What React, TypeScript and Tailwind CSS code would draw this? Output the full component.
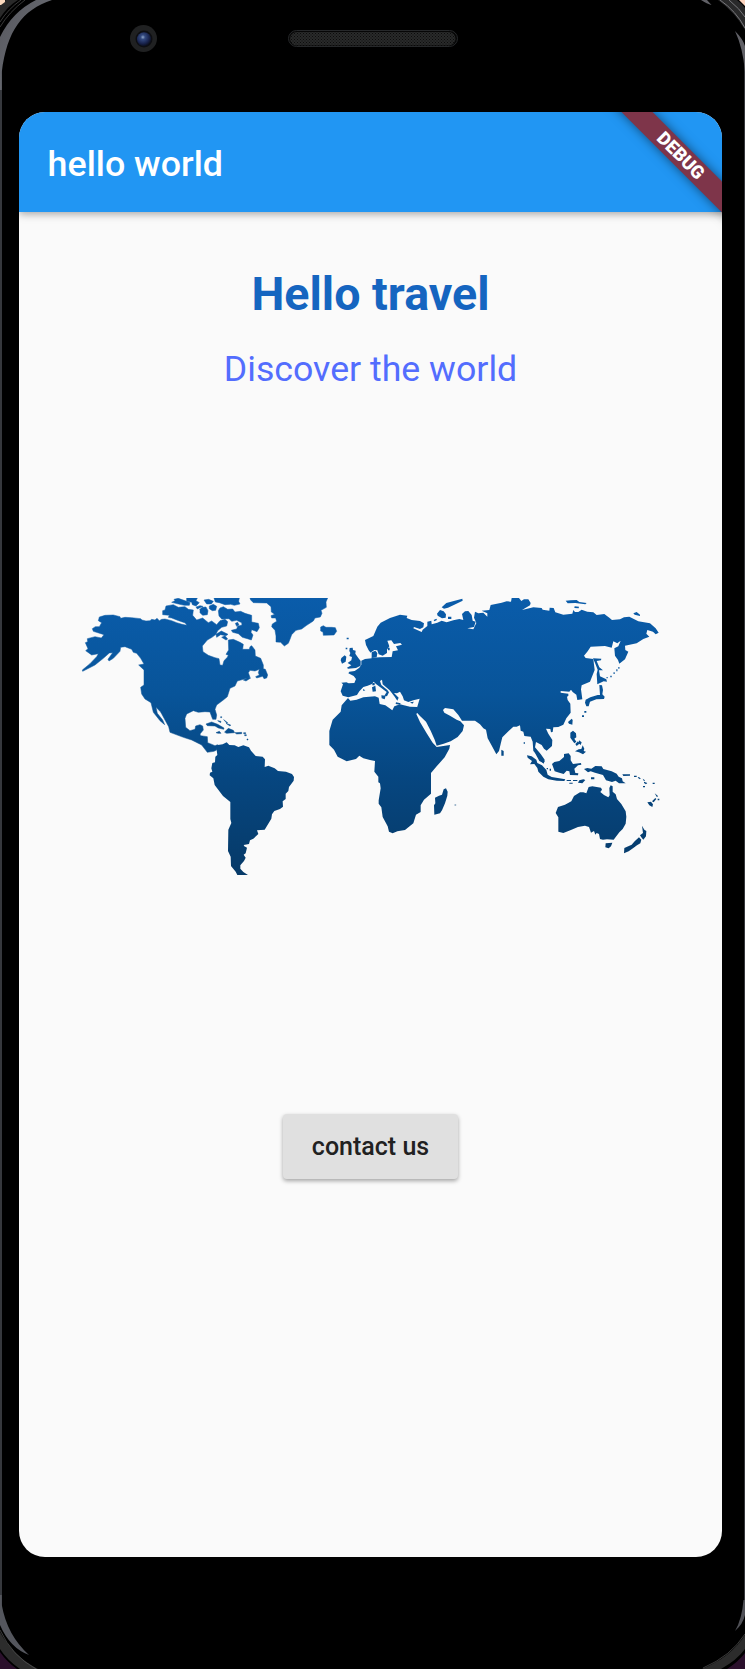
import React from "react";

function WorldMap() {
  return (
    <svg className="block h-[277px] w-[600px]" viewBox="71 598 600 277" role="img" aria-label="World map">
      <defs>
        <linearGradient id="ocean" x1="0" y1="598" x2="0" y2="875" gradientUnits="userSpaceOnUse">
          <stop offset="0" stopColor="#0a5caa" />
          <stop offset="0.35" stopColor="#085499" />
          <stop offset="0.65" stopColor="#064680" />
          <stop offset="1" stopColor="#063a68" />
        </linearGradient>
        <mask id="land" maskUnits="userSpaceOnUse" x="70" y="598" width="600" height="277">
          {/* Americas, Greenland and Iceland */}
          <g transform="translate(70 590) scale(.33333)" fill="#fff" stroke="#fff" strokeWidth="1.5" strokeLinejoin="round">
            <path d="M95 98L85 92L88 81L105 76L130 75L150 80L152 85L165 82L185 83L212 86L216 90L228 93L240 92L245 88L255 90L261 85L268 92L275 88L285 87L305 92L320 98L336 103L350 106L346 99L326 92L305 84L295 82L298 76L278 74L278 62L285 60L288 48L310 44L325 52L345 50L355 58L370 60L368 76L380 90L398 84L415 98L425 93L440 104L450 92L465 88L473 95L470 108L455 112L443 122L438 133L426 142L412 150L397 168L399 185L415 196L435 203L447 206L450 225L458 226L462 212L472 202L475 196L468 193L476 180L475 150L490 148L510 157L520 163L518 178L538 178L540 170L545 167L555 180L556 198L572 205L580 225L580 236L586 238L593 255L590 264L582 266L578 259L560 264L557 260L568 255L565 248L568 238L555 243L540 241L535 248L540 262L520 268L502 273L495 288L480 295L472 320L460 330L440 345L435 358L440 375L438 388L428 388L422 372L420 366L405 365L385 367L370 362L350 372L345 385L347 412L360 422L375 418L377 408L390 404L398 408L400 420L390 432L392 437L412 440L413 458L435 467L443 464L440 480L432 484L412 487L395 465L365 450L340 442L300 427L296 410L285 390L272 366L258 352L262 370L278 390L284 404L270 392L250 367L243 338L225 327L215 312L212 292L222 285L222 240L206 225L222 222L212 205L200 190L190 187L185 178L165 170L152 172L150 184L130 205L117 213L114 208L128 188L118 189L100 205L75 225L38 244L37 240L60 221L80 200L85 191L65 195L47 182L54 176L46 158L53 155L52 146L75 140L94 144L102 134L70 124L67 116L76 110L88 110Z" />
            <path d="M305 37L315 32L312 28L325 25L350 34L360 38L358 46L343 46L325 42Z" />
            <path d="M350 24L382 24L378 32L388 38L378 48L367 44L365 37L350 34Z" />
            <path d="M432 24L508 24L506 34L510 42L493 46L482 43L465 44L448 38L436 36Z" />
            <path d="M390 58L396 52L408 51L414 62L412 74L398 76L390 68Z" />
            <path d="M418 48L430 43L440 49L437 61L427 62L418 56Z" />
            <path d="M402 30L416 28L430 34L424 42L410 42Z" />
            <path d="M378 51L390 47L399 49L382 57Z" />
            <path d="M445 62L450 54L460 50L473 58L488 57L495 66L512 64L525 70L545 76L545 96L565 100L568 113L561 125L545 119L543 127L549 135L544 150L532 146L517 142L505 131L488 127L484 121L500 117L503 109L516 105L515 98L500 91L485 94L477 86L455 87L447 78Z" />
            <path d="M438 133L454 123L474 133L468 137L452 134L440 142Z" />
            <path d="M455 142L465 137L473 147L468 150Z" />
            <path d="M496 100L503 97L507 105L500 109Z" />
            <path d="M520 270L535 262L542 264L528 273Z" />
            <path d="M408 402L425 396L443 403L462 414L461 418L445 414L435 408L412 407Z" />
            <path d="M466 424L475 415L490 421L494 428L470 430L464 427Z" />
            <path d="M438 428L448 424L453 430L444 430ZM495 428L515 427L515 431L500 432Z" />
            <path d="M452 380h3v3h-3zM443 392l10 2-1 4zM461 389l12 9-3 1zM468 400l14 5-2 3zM521 428h6v3h-6zM524 434h5v3h-5zM531 447h3v3h-3z" />
            <path d="M540 24H773L768 36L769 52L753 61L756 70L751 81L735 84L730 93L710 106L695 117L678 121L665 134L660 148L655 160L643 168L632 157L618 156L618 138L615 121L605 110L607 102L620 94L617 84L605 84L603 77L614 73L604 66L603 50L590 39L550 38L542 30Z" />
            <path d="M752 111L760 107L768 112L785 112L796 113L800 124L792 135L760 136L759 126L752 123Z" />
          </g>
          <g transform="translate(200 730) scale(.33333)" fill="#fff">
            <path d="M50 60L49 46L68 43L80 37L88 45L104 46L115 51L130 46L147 52L153 62L167 78L188 80L195 88L194 111L205 107L224 115L234 123L258 125L276 132L282 141L281 152L267 171L265 183L257 191L257 207L248 214L249 230L240 237L223 243L216 253L214 266L194 299L171 301L175 312L160 326L150 331L147 342L131 345L133 349L141 353L137 370L131 374L137 383L132 393L121 406L121 416L130 426L144 435H112L107 425L93 408L92 380L84 363L85 299L94 279L91 267L91 216L69 198L44 165L40 145L29 136L30 128L37 125L34 115L37 99L45 97L46 80L52 75Z" />
          </g>
          {/* Africa */}
          <g transform="translate(320 680) scale(.33333)" fill="#fff">
            <path d="M84 54L91 62L110 59L130 52L165 49L176 53L179 72L196 76L217 91L223 79L240 73L270 80L292 81L296 92L289 102L300 126L320 160L338 188L350 201L390 195L388 206L374 232L350 259L333 279V341L312 359L302 376V396L288 404L280 430L255 450L232 454L218 460L207 455L203 439L188 411L184 382L176 371V361L182 325L180 310L175 307L175 290L163 275L165 243L150 240L130 235L118 227L108 237L80 244L53 230L42 209L28 195L28 153L38 119L62 95L65 76Z" />
            <path d="M345 353L357 347L366 344L371 328L378 325L383 335L382 347L375 370L366 391L360 400L343 404L342 376L346 370Z" />
            <circle cx="406" cy="375" r="3" opacity=".4" />
          </g>
          {/* Europe and Asia */}
          <g transform="translate(320 590) scale(.33333)" fill="#fff">
            <path d="M135 150L160 138L172 110L182 98L210 84L240 74L262 77L260 84L275 90L300 93L312 100L310 112L300 117L282 111L280 115L305 126L308 119L322 108L322 95L334 92L335 103L352 98L365 92L380 97L400 91L418 87L430 90L426 72L435 64L445 63L455 75L458 92L467 95L462 111L442 115L460 118L469 99L462 83L465 65L475 70L490 68L502 80L502 70L485 62L508 60L512 45L545 38L560 34L573 35L575 24H597L604 33L612 28H625L632 39L630 46L606 60L640 52L665 54L668 59L688 62L689 53L701 54L706 67L730 74L757 71L760 60L765 66H775L785 59L802 65L820 67L830 75L853 72L868 83L876 90L900 88L912 82L928 80L955 94L990 100L1007 115L1016 128L1007 133L999 125L982 120L979 131L988 140L970 147L950 160L915 167L916 180L925 185L915 208L898 221L894 210L885 197L883 175L895 169L902 152L892 160L880 154L875 173L855 168L812 170L803 184L792 197L797 204L820 207L824 240L810 275L785 286L783 298L787 328L772 330L769 314L758 306L753 299L748 305L722 303L722 308L745 311V318L741 320L743 330L751 341L752 368L739 385L730 404L715 411L700 412L698 426L693 427L691 417L678 416L685 431L697 450L696 468L680 482L672 476L665 465L648 456L645 472L662 492L674 509L671 521L662 512L650 493L640 483L638 455L632 440L613 438L610 425L602 422L600 406L590 410L580 410L566 423L547 442L542 462L537 483L529 493L519 474L503 445L498 419L490 415L480 403L465 392L440 392L426 392L415 375L400 358L375 354L369 360L373 368L390 377L410 389L421 394L432 406L428 423L413 441L392 454L371 461L350 467L344 449L332 422L318 395L300 378L291 368L291 353L299 326L280 331L265 336L252 331L248 319L240 305L231 310L222 309L236 323L232 332L224 320L209 301L188 283L186 269L180 273L184 285L202 300L207 307L201 319L193 317L200 306L179 290L168 282L161 275L156 282L143 287L130 291L118 304L111 315L85 322L68 317L62 304L69 283L64 278L79 277L86 280L103 279L108 267L101 258L85 250L88 245L104 243L118 233L124 224L124 212L135 207L155 205L153 190L146 181L138 165Z" />
            <path d="M172 181L163 180L151 188L153 203L180 202L215 201L218 184L234 181L228 169L246 164L241 159L222 162L214 151L202 152L208 169L201 179L201 189L188 197L176 193Z" fill="#000" />
            <path d="M155 187L166 182L172 189L170 202L155 204ZM204 173h5v8h-5z" />
            <path d="M89 174L98 173L99 180L107 182L106 191L115 204L122 213L122 227L108 234L84 236L81 233L94 226L83 219L94 211L96 201L88 198L91 189L88 183ZM64 204L74 196L79 200L77 215L66 221L62 211Z" />
            <path d="M365 52L379 39L410 31L427 26L428 32L403 44L384 53L372 56ZM351 71L360 60L371 64L378 73L377 83L366 85L353 77ZM384 80h10v7h-10zM341 90l8-4 2 4-8 4z" />
            <path d="M80 143h6v5h-6zM77 173h5v5h-5zM156 292L166 287L168 304L158 305ZM157 279h7v7h-7zM184 316L197 317L194 328L185 325ZM129 297l7 4-6 2zM228 337l14 3-2 4-13-2zM270 337l12-2-5 6z" />
            <path d="M737 32L752 31L770 30L778 36L800 39L796 43L766 39L743 40ZM764 49l13 1-1 5-13-1zM940 70L950 66L960 74L960 78L944 74Z" />
            <path d="M819 205L844 206L843 211L830 213L838 232L849 241L837 241L840 259L859 268L861 275L851 274L832 283L830 252L833 239L826 221ZM838 285L846 286L849 300L847 313L854 320L852 327L829 328L810 335L806 349L799 349L795 338L797 329L811 322L833 315L840 315Z" />
            <path d="M894 231h5v5h-5zM888 238h5v6h-5zM880 247h5v5h-5zM870 257h6v5h-6zM859 261h5v4h-5z" opacity=".7" />
            <path d="M793 363h6v5h-6zM786 376h6v5h-6zM744 396L755 386L758 390L757 404L747 401ZM544 479L551 483L551 497L544 497ZM611 457h4v4h-4z" />
          </g>
          {/* Southeast Asia and Oceania */}
          <g transform="translate(510 710) scale(.33333)" fill="#fff">
            <path d="M51 136L65 139L79 149L82 159L96 166L109 180L113 194L125 201L148 205L166 208L163 213L140 212L115 208L100 200L85 185L82 174L73 162L60 163L66 153L53 143ZM73 125L83 126L94 139L104 154L101 160L88 153Z" />
            <path d="M126 162L133 156L148 153L162 141L162 132L176 130L182 138L182 151L189 162L213 159L214 164L204 166L193 176L196 189L205 190L204 196L180 195L178 184L170 182L161 192L148 188L134 184Z" />
            <path d="M222 177L232 174L244 176L256 168L275 169L280 177L305 184L320 191L326 200L336 205L338 214L347 220H327L317 212L306 216L288 211L279 195L255 188L242 184L234 187Z" />
            <path d="M181 68L189 62L198 70L199 82L193 86L199 95L193 100L181 83ZM196 102l8-8 4 7-8 7zM207 91l8 6-3 8-6-5zM195 124L206 118L214 117L218 106L223 116L221 123L228 125L219 133L207 127ZM170 210h13v3h-13zM189 210h13v3h-13zM204 218L208 211L220 208L226 210L217 220ZM178 218h10v3h-10zM243 202h10v6h-10zM337 193L360 193L360 197L340 198ZM372 197h8v4h-8zM386 201l6 4-2 3-7-5zM398 206l7 5-3 3zM402 215l10 4-4 4-6-4zM399 228h6v4h-6zM428 218h6v4h-6zM412 277L423 275L429 283L427 291L418 286ZM426 274l10-10 3 3-8 10zM434 250l10 8-3 4zM443 266h5v5h-5zM119 176h4v6h-4zM110 174h4v4h-4z" />
            <path d="M302 226L308 229L308 245L317 253L321 267L334 282L347 304L349 320L347 341L338 357L328 367L311 389L291 388L279 389L270 387L267 372L260 369L256 374L252 363L243 368L237 351L225 347L204 351L181 361L160 369L145 365V322L137 309L144 291L165 284L184 274L192 258L210 247H220L229 250L236 231L247 229L273 233L276 239L271 246L282 255L295 262L299 256L298 234Z" />
            <path d="M287 400L307 398L303 409L296 415L286 412ZM396 347L403 359L409 363L408 379L400 389L395 383L390 376L399 369ZM387 382L394 389L391 400L381 406L370 414L356 424L342 430L343 414L365 404L374 394Z" />
          </g>
        </mask>
      </defs>
      <rect x="70" y="598" width="600" height="277" fill="url(#ocean)" mask="url(#land)" />
    </svg>
  );
}

function PhoneShell() {
  return (
    <svg className="absolute inset-0 h-[1669px] w-[745px]" viewBox="0 0 745 1669" aria-hidden="true">
      <defs>
        <linearGradient id="edge" x1="0" y1="0" x2="1" y2="1">
          <stop offset="0" stopColor="#55565c" />
          <stop offset=".5" stopColor="#65676e" />
          <stop offset="1" stopColor="#44474d" />
        </linearGradient>
        <pattern id="mesh" width="3" height="3" patternUnits="userSpaceOnUse">
          <rect width="3" height="3" fill="#292a2a" />
          <path d="M0 0h1v1H0zM1.5 1.5h1v1h-1z" fill="#0c0c0c" />
        </pattern>
        <radialGradient id="lens" cx=".42" cy=".35" r=".65">
          <stop offset="0" stopColor="#8fa5c8" />
          <stop offset=".25" stopColor="#33497f" />
          <stop offset=".7" stopColor="#18234d" />
          <stop offset="1" stopColor="#0b0e1b" />
        </radialGradient>
      </defs>
      <rect width="745" height="1669" fill="#000" />
      <path d="M1 66V1610" stroke="#44474d" strokeWidth="1.6" />
      <path d="M744.5 62V1610" stroke="#36373b" />
      {/* top corners */}
      <path d="M0 5L6 0H18C11 4 5 10 0 18Z" fill="#292929" />
      <path d="M0 22Q8 9 21 0M0 27Q9 12 25 0" stroke="#606060" strokeWidth=".6" fill="none" />
      <path d="M0 0H5V2L1 5H0Z" fill="#fbd9bd" />
      <path d="M0 37Q12 12 36 0H52C22 10 7 31 1.8 72V90H0Z" fill="url(#edge)" />
      <path d="M718 0H737Q742 4 745 8V30Q735 12 718 0Z" fill="#29292a" />
      <path d="M720 0Q736 11 745 28M729 0Q740 9 745 17" stroke="#77777b" strokeWidth="1" fill="none" />
      <path d="M739 0H745V6Z" fill="#fbd3bd" />
      <path d="M701 0H707L711.500 5Q707 4 701 0ZM735 31Q743 39 745 46V72Q743 48 735 31Z" fill="#606066" />
      {/* bottom corners */}
      <path d="M0 1652Q7 1662 17 1669H0Z" fill="#2b102c" />
      <path d="M0 1632Q13 1656 38 1669H20Q7 1660 0 1649Z" fill="#2c2c2c" />
      <path d="M0 1630Q12 1656 36 1669" stroke="#555" strokeWidth=".7" fill="none" />
      <path d="M0 1595H1.800V1605Q7 1635 29 1655Q10 1648 0 1625Z" fill="#54565d" />
      <path d="M745 1653Q738 1662 727 1669H745Z" fill="#2b102c" />
      <path d="M745 1635Q731 1657 702 1669H721Q737 1660 745 1649Z" fill="#2c2c2c" />
      <path d="M745 1634Q731 1656 703 1668" stroke="#555" strokeWidth=".7" fill="none" />
      <path d="M745 1600H743.500Q742 1619 735 1631Q743 1624 745 1615Z" fill="#505157" />
      {/* camera and speaker */}
      <circle cx="143.500" cy="38.500" r="13.500" fill="#202122" />
      <circle cx="144" cy="39" r="8.500" fill="#0d0e12" />
      <circle cx="144" cy="39.300" r="7" fill="url(#lens)" />
      <rect x="288.500" y="30.500" width="169" height="16" rx="8" fill="#060606" stroke="#26282a" strokeWidth="1" />
      <rect x="290" y="32" width="165.500" height="13.500" rx="6.700" fill="url(#mesh)" />
    </svg>
  );
}

export default function App() {
  return (
    <div className="relative h-[1669px] w-[745px] overflow-hidden bg-black px-[19px] pt-[112px] font-[Roboto,sans-serif]">
      <PhoneShell />
      <main className="relative h-[1445px] w-[703px] overflow-hidden rounded-[26px] bg-[#fafafa]">
        <header className="relative flex h-[100px] items-center bg-[#2196f3] px-[28.6px] pt-[3px] shadow-[0_2px_8px_rgba(0,0,0,0.35)]">
          <span className="whitespace-nowrap text-[35.8px] leading-[42px] font-medium text-white">hello world</span>
        </header>
        <section className="flex flex-col items-center">
          <h1 className="mt-[54px] text-[46.6px] leading-[56px] font-bold text-[#1565c0]">Hello travel</h1>
          <p className="mt-[26px] text-[35.7px] leading-[42px] text-[#536dfe]">Discover the world</p>
          <div className="mt-[208px]">
            <WorldMap />
          </div>
          <button className="mt-[239px] h-[65px] w-[175px] rounded-[4px] bg-[#e0e0e0] pt-px text-[25px] font-medium text-[#212121] shadow-[0_2px_4px_rgba(0,0,0,0.35)]">
            contact us
          </button>
        </section>
        <div className="absolute top-[32px] left-[560.5px] flex h-[22px] w-[200px] rotate-45 items-center justify-center bg-[#7e354a] pl-[2px] text-[18.3px] leading-none font-black text-white shadow-[0_0_11px_rgba(0,0,0,0.5)]">
          DEBUG
        </div>
      </main>
    </div>
  );
}
